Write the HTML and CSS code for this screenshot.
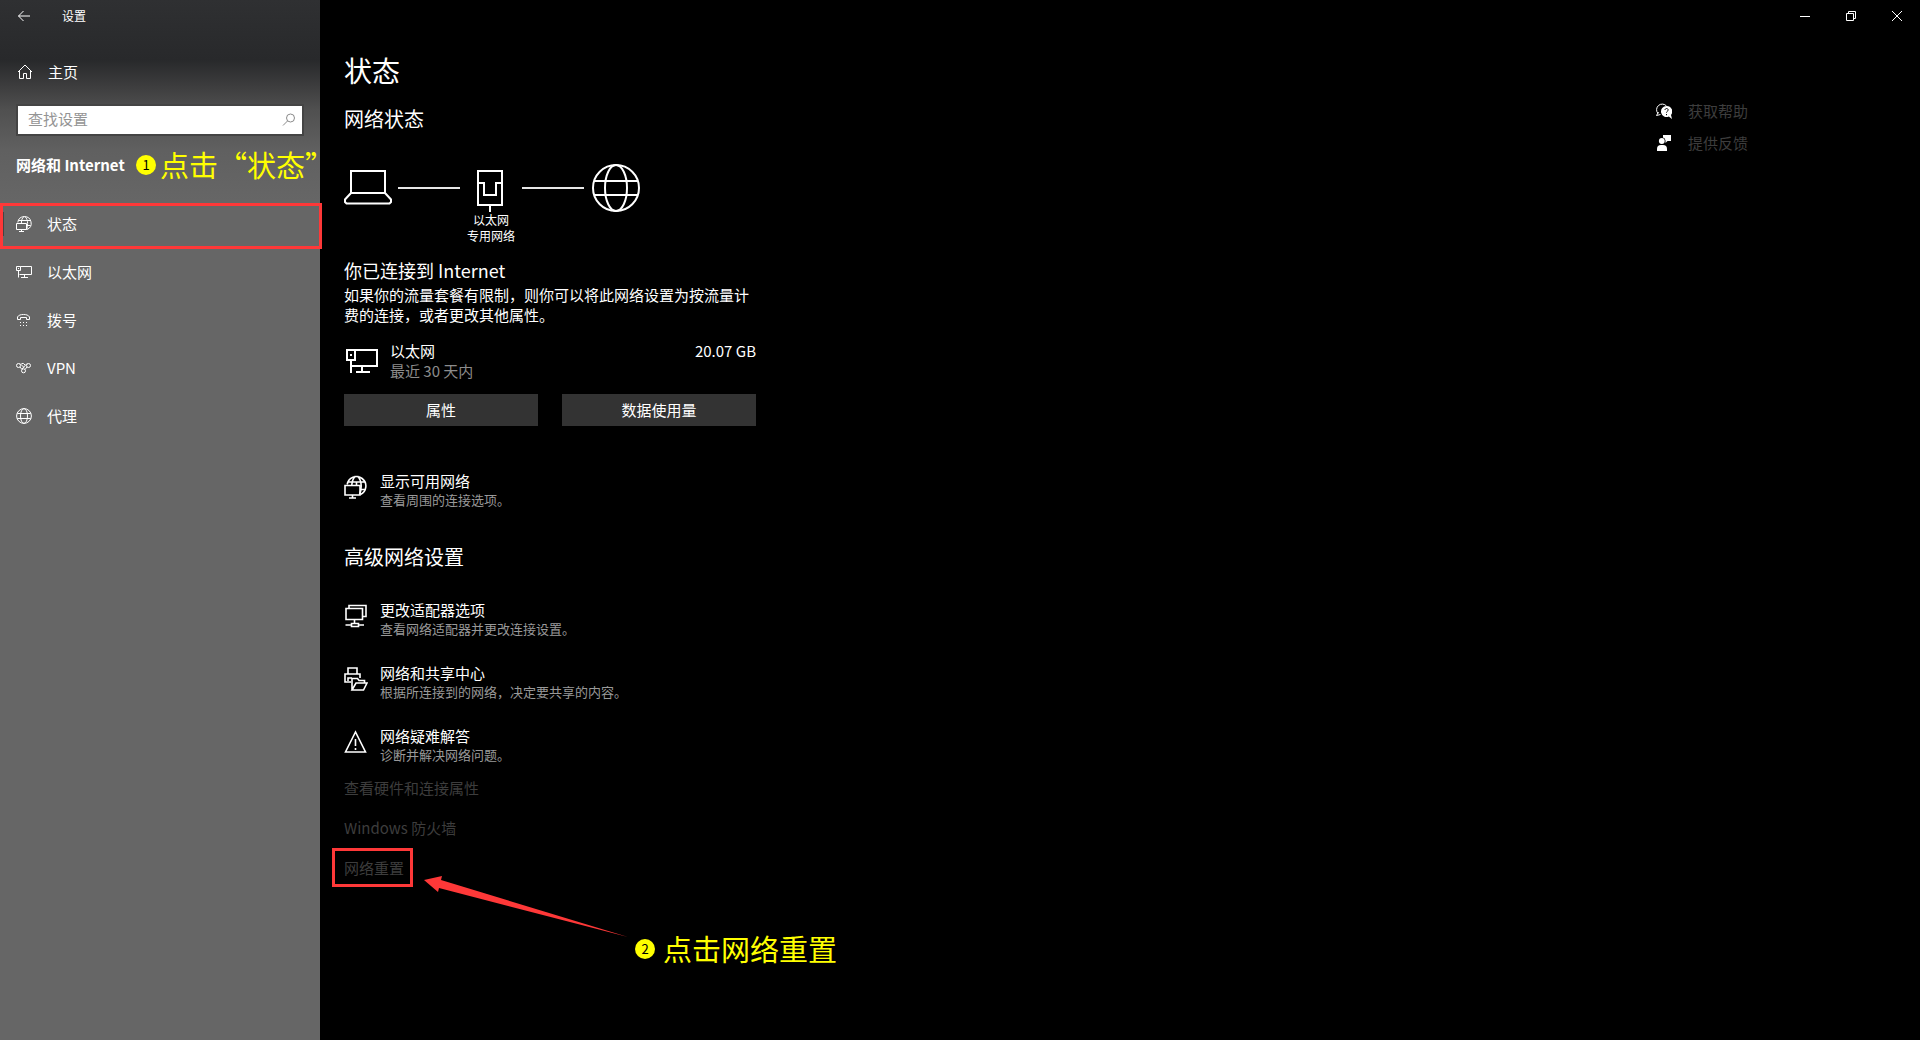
FILE: index.html
```html
<!DOCTYPE html>
<html lang="zh-CN">
<head>
<meta charset="utf-8">
<title>设置</title>
<link rel="stylesheet" href="styles.css">
</head>
<body>
<div class="window">
  <aside class="sidebar">
    <header class="caption">
      <button class="back" type="button" aria-label="返回">
        <svg width="14" height="12" viewBox="0 0 14 12" class="line"><path d="M13 6H1.5M6.5 1 1.5 6l5 5"/></svg>
      </button>
      <span class="caption-text">设置</span>
    </header>
    <a class="home" href="#">
      <svg width="16" height="16" viewBox="0 0 16 16" class="line"><path d="M1 8 8 1l7 7M2.5 6.8v7.7h4v-5h3v5h4V6.8"/></svg>
      <span>主页</span>
    </a>
    <div class="search">
      <input type="search" placeholder="查找设置" aria-label="查找设置">
      <svg class="search-icon" width="14" height="14" viewBox="0 0 14 14"><circle cx="8.5" cy="5" r="4"/><path d="M5.6 7.9 1 12.5"/></svg>
    </div>
    <div class="section">
      <h2 class="section-title">网络和 Internet</h2>
      <div class="note note-one"><span class="badge">1</span><span class="note-text">点击“状态”</span></div>
    </div>
    <nav class="nav">
      <a class="nav-item active" href="#" aria-current="page">
        <svg width="16" height="16" viewBox="0 0 16 16" class="line"><path d="M1.800 6.500A6.700 6.700 0 1 1 11 13.500M2.500 4.500h11.500M11 9.500h3.500M8 .5C6 2 5.500 4 5.400 7M9 .5c2 2 2.600 4.500 2.600 7 0 2-.2 4-1 6"/><path d="M.5 7.500h10v6H.5zM5.500 13.500v2M3 15.500h5"/></svg>
        <span>状态</span>
      </a>
      <a class="nav-item" href="#">
        <svg width="16" height="14" viewBox="0 0 16 14" class="line"><path d="M4.500 1.500h11v8h-12M.5 1.500h4v4h-4zM2.500 5.500v7M2 3.500h1M8.500 9.500v2.500M5 12.500h7"/></svg>
        <span>以太网</span>
      </a>
      <a class="nav-item" href="#">
        <svg width="16" height="14" viewBox="0 0 16 14" class="line"><path d="M1.500 6.500V4C2.500 2 5 1.500 7.500 1.500S12.500 2 13.500 4v2.500h-3V4.500h-6v2z"/><path d="M4 9.500h1M7 9.500h1M10 9.500h1M4 12.500h1M7 12.500h1M10 12.500h1"/></svg>
        <span>拨号</span>
      </a>
      <a class="nav-item" href="#">
        <svg width="16" height="12" viewBox="0 0 16 12" class="line"><circle cx="2.500" cy="3.500" r="2"/><circle cx="12.500" cy="3.500" r="2"/><circle cx="7.500" cy="8.800" r="2"/><path d="M4 1.500 8 5.500M4 5l2 2.500M5.500 1.500h2l1.500 1.500M11 1.500 6 7M11 5 9 7.500"/></svg>
        <span>VPN</span>
      </a>
      <a class="nav-item" href="#">
        <svg width="16" height="16" viewBox="0 0 16 16" class="line"><circle cx="8" cy="8" r="7.400"/><ellipse cx="8" cy="8" rx="3.500" ry="7.400"/><path d="M1.300 5.500h13.400M1.300 10.500h13.400"/></svg>
        <span>代理</span>
      </a>
    </nav>
  </aside>

  <div class="page">
    <div class="controls">
      <button type="button" aria-label="最小化"><svg width="10" height="10" viewBox="0 0 10 10" class="line"><path d="M0 5.500h10"/></svg></button>
      <button type="button" aria-label="还原"><svg width="10" height="10" viewBox="0 0 10 10" class="line"><path d="M.5 2.500h7v7h-7zM2.500 2.500v-2h7v7h-2"/></svg></button>
      <button type="button" aria-label="关闭"><svg width="10" height="10" viewBox="0 0 10 10" class="line"><path d="M0 0 10 10M10 0 0 10"/></svg></button>
    </div>
    <div class="columns">
      <main class="content">
        <h1 class="title">状态</h1>
        <h2 class="heading">网络状态</h2>

        <div class="diagram">
          <svg width="48" height="48" viewBox="0 0 48 48" class="line bold"><path d="M7 7h34v22H7zM7 29 1 35.500V38l1.500 1.500h43L47 38v-2.500L41 29"/></svg>
          <i class="wire"></i>
          <div class="adapter">
            <svg width="28" height="48" viewBox="0 0 28 48" class="line bold"><path d="M1 7h24v34H1zM1 19h6v12h12V19h6M13 41v7"/></svg>
            <span>以太网</span>
            <span>专用网络</span>
          </div>
          <i class="wire"></i>
          <svg class="globe" width="48" height="48" viewBox="0 0 48 48"><g class="line bold"><circle cx="24" cy="24" r="23"/><ellipse cx="24" cy="24" rx="11" ry="23"/><path d="M2.500 17h43M2.500 31h43"/></g></svg>
        </div>

        <h3 class="subheading">你已连接到 Internet</h3>
        <p class="text">如果你的流量套餐有限制，则你可以将此网络设置为按流量计费的连接，或者更改其他属性。</p>

        <div class="usage">
          <svg width="34" height="28" viewBox="0 0 34 28" class="line bold"><path d="M11 3h22v16H6M3 3h8v10H3zM7 13v13M6 8h2M18 19v6M12 25h14"/></svg>
          <div class="usage-name"><span>以太网</span><span class="dim">最近 30 天内</span></div>
          <span>20.07 GB</span>
        </div>
        <div class="buttons">
          <button type="button">属性</button>
          <button type="button">数据使用量</button>
        </div>

        <a class="entry" href="#">
          <svg width="24" height="24" viewBox="0 0 24 24" class="line mid"><path d="M3.200 9.500A9.400 9.400 0 1 1 16.500 19.500M4.500 7h16.500M17 14.500h4.500M11.500 1C9 3.500 8 6 7.800 10M13.500 1c2.800 3 3.700 6 3.700 10 0 3-.3 5.500-1.700 8.500M12.500 7v3"/><path d="M1 10.500h15v9.500H1zM8.500 20v3M5 23h7"/></svg>
          <div><span>显示可用网络</span><small>查看周围的连接选项。</small></div>
        </a>

        <h2 class="heading advanced">高级网络设置</h2>
        <div class="entries">
          <a class="entry" href="#">
            <svg width="24" height="24" viewBox="0 0 24 24" class="line mid"><path d="M2 4.500h16.500v11H2zM5 4V1.500h17v11h-3M10.500 16v3M1.500 21H7M14.500 21H20M7.500 19.500h7v3h-7z"/></svg>
            <div><span>更改适配器选项</span><small>查看网络适配器并更改连接设置。</small></div>
          </a>
          <a class="entry" href="#">
            <svg width="24" height="24" viewBox="0 0 24 24" class="line mid"><path d="M4 7V1h9v6M7 15H1V7h15v4M4 14v-3h4M8 23V11.500h5.500l1.500 2h5.500V16M8 23l4-7h11l-3.500 7z"/></svg>
            <div><span>网络和共享中心</span><small>根据所连接到的网络，决定要共享的内容。</small></div>
          </a>
          <a class="entry" href="#">
            <svg width="24" height="24" viewBox="0 0 24 24" class="line mid"><path d="M11.500 2 1.500 22h20zM11.500 9v7M11.500 18v2"/></svg>
            <div><span>网络疑难解答</span><small>诊断并解决网络问题。</small></div>
          </a>
        </div>

        <div class="links">
          <a href="#">查看硬件和连接属性</a>
          <a href="#">Windows 防火墙</a>
          <a class="reset" href="#">网络重置</a>
          <div class="callout">
            <svg width="206" height="64" viewBox="0 0 206 64"><path d="M0 5 18 1 17 5 204 62 15 13 14 17z"/></svg>
            <div class="note note-two"><span class="badge">2</span><span class="note-text">点击网络重置</span></div>
          </div>
        </div>
      </main>

      <aside class="help">
        <a href="#">
          <svg width="16" height="16" viewBox="0 0 16 16"><path class="line" d="M2 10.500A5 5 0 1 1 10.500 3M2.500 9 .5 12.500l4-1"/><path class="fill" d="M10.500 3a5.500 5.500 0 1 0 2.300 10.500L16 16l-1-4A5.500 5.500 0 0 0 10.500 3z"/><path class="mark" d="M9 7c0-2 3.200-2 3.200 0 0 1.200-1.700 1.300-1.700 2.600M10.500 11v1.200"/></svg>
          <span>获取帮助</span>
        </a>
        <a href="#">
          <svg width="16" height="16" viewBox="0 0 16 16"><path class="fill" d="M7 0h8v6h-3.500L9.500 8V5.500A3.400 3.400 0 0 0 7 2.600z"/><circle class="fill" cx="5.800" cy="6" r="2.900"/><path class="fill" d="M1 16v-2a4 4 0 0 1 4-4h2a4 4 0 0 1 4 4v2z"/></svg>
          <span>提供反馈</span>
        </a>
      </aside>
    </div>
  </div>
</div>
</body>
</html>
```
FILE: styles.css
```css
* { box-sizing: border-box; }

body {
  margin: 0;
  background: #000;
  color: #fff;
  font: 15px/20px "Noto Sans CJK SC", "Noto Sans", sans-serif;
}

a { color: inherit; text-decoration: none; }
h1, h2, h3, p { margin: 0; font-weight: 400; }
button { border: 0; padding: 0; color: inherit; font: inherit; background: none; }
svg { display: block; flex: none; }

.line { fill: none; stroke: #fff; stroke-width: 1; }
.mid { stroke-width: 1.6; }
.bold { stroke-width: 2; }
.fill { fill: #fff; }
.mark { fill: none; stroke: #000; stroke-width: 1; }

.window { display: flex; min-height: 100vh; }

/* Sidebar */
.sidebar {
  flex: none;
  width: 320px;
  background: linear-gradient(#2f3032 0, #28292b 60px, #3c3c3d 85px, #505050 110px, #606060 150px, #666 200px);
}
.caption { display: flex; align-items: center; height: 32px; font-size: 12px; }
.back { display: grid; place-items: center; width: 48px; height: 32px; }
.caption-text { margin-left: 14px; }
.home {
  display: flex;
  align-items: center;
  gap: 15px;
  height: 48px;
  margin-top: 16px;
  padding-left: 17px;
}
.search { position: relative; margin: 8px 16px 0; }
.search input {
  display: block;
  width: 100%;
  height: 32px;
  border: 2px solid #444;
  border-radius: 0;
  padding: 0 36px 3px 10px;
  background: #fff;
  color: #000;
  font: inherit;
}
.search input::placeholder { color: #949494; opacity: 1; }
.search-icon { position: absolute; right: 8px; top: 9px; fill: none; stroke: #8a8a8a; }
.section {
  position: relative;
  display: flex;
  align-items: center;
  height: 50px;
  margin-top: 4px;
  padding-left: 16px;
}
.section-title { font-size: 15px; font-weight: 700; }
.nav { margin-top: 10px; }
.nav-item {
  position: relative;
  display: flex;
  align-items: center;
  gap: 15px;
  height: 48px;
  padding-left: 16px;
}
.nav-item span { padding-bottom: 1px; }
.nav-item.active::before {
  content: "";
  position: absolute;
  left: 0;
  top: 12px;
  width: 4px;
  height: 24px;
  background: #444;
}
.nav-item.active::after {
  content: "";
  position: absolute;
  inset: 3px -2px -1px 0;
  border: 3px solid #fe3838;
}

/* Annotations */
.note {
  position: absolute;
  display: flex;
  align-items: center;
  color: #ff0;
  font-size: 29px;
  line-height: 40px;
  white-space: nowrap;
}
.note-text { padding-bottom: 2px; }
.note-one { left: 136px; top: 4px; gap: 4px; }
.badge {
  width: 20px;
  height: 20px;
  border-radius: 50%;
  background: #ff0;
  color: #000;
  font-size: 13px;
  line-height: 19px;
  text-align: center;
}

/* Page */
.page { flex: 1; min-width: 0; }
.controls { display: flex; justify-content: flex-end; height: 32px; }
.controls button { display: grid; place-items: center; width: 46px; }
.columns { display: flex; justify-content: space-between; padding-left: 24px; }
.content { width: 412px; padding-top: 18px; }
.title { font-size: 28px; line-height: 40px; }
.heading { margin-top: 15px; font-size: 20px; line-height: 28px; }

.diagram { display: flex; margin-top: 31px; }
.wire { width: 62px; height: 2px; margin-top: 23px; background: #e6e6e6; }
.diagram > svg:first-child { margin-right: 6px; }
.globe { margin-left: 8px; }
.adapter {
  display: flex;
  flex-direction: column;
  align-items: center;
  width: 62px;
  font-size: 12px;
  line-height: 16px;
}

.subheading { margin-top: 12px; font-size: 18px; line-height: 28px; }
.text { margin-top: 1px; }
.usage { display: flex; margin-top: 16px; }
.usage svg { margin: 6px 12px 0 0; }
.usage-name { display: flex; flex: 1; flex-direction: column; }
.dim { color: #8c8c8c; }
.buttons { display: flex; gap: 24px; margin-top: 13px; }
.buttons button { flex: 1; height: 32px; padding-bottom: 1px; background: #333; }

.entry { display: flex; gap: 12px; }
.entry div { display: flex; flex-direction: column; }
.entry small { color: #999; font-size: 13px; line-height: 18px; }
.buttons + .entry { margin-top: 45px; }
.entry svg { margin-top: 4px; }
.advanced { margin-top: 34px; }
.entries { display: flex; flex-direction: column; gap: 25px; margin-top: 29px; }

.links {
  position: relative;
  display: flex;
  flex-direction: column;
  align-items: flex-start;
  gap: 20px;
  margin-top: 14px;
  color: #3d3d3d;
}
.reset { position: relative; }
.reset::after {
  content: "";
  position: absolute;
  inset: -10px -9px -9px -12px;
  border: 3px solid #fe3838;
}
.callout { position: absolute; left: 80px; top: 97px; fill: #fe3838; }
.note-two { left: 211px; top: 53px; gap: 8px; }

.help {
  display: flex;
  flex-direction: column;
  gap: 12px;
  width: 264px;
  padding-top: 69px;
  color: #3d3d3d;
}
.help a { display: flex; align-items: center; gap: 16px; }
```
